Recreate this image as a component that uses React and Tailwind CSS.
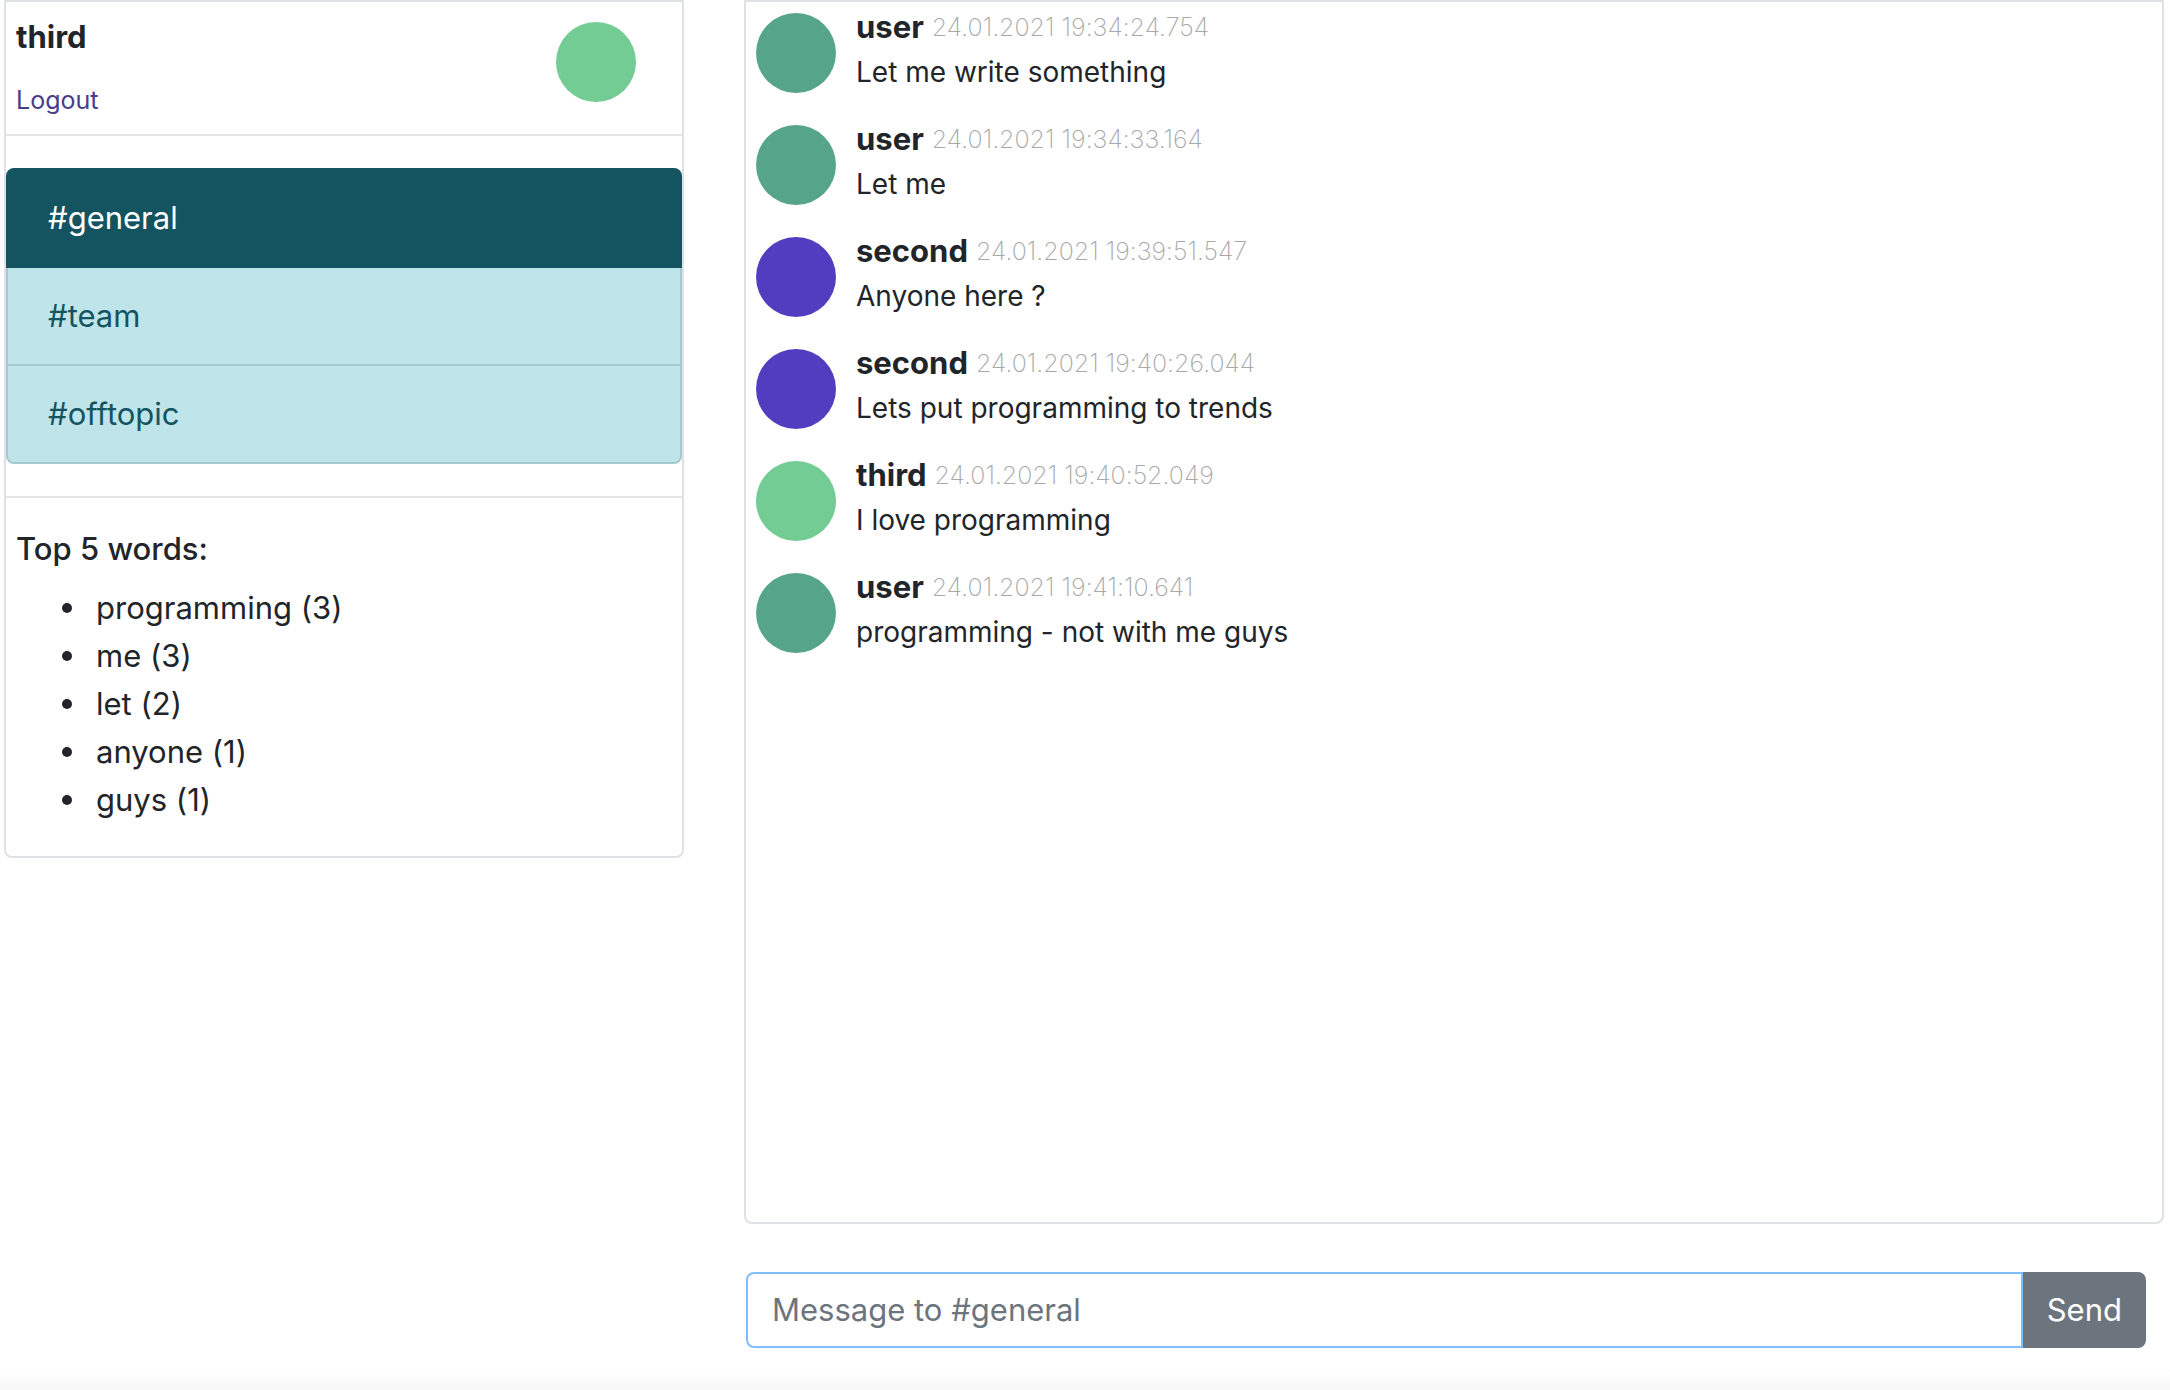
const avatarColors = {
  user: "bg-[#56a58a]",
  second: "bg-[#523cc0]",
  third: "bg-[#72cc93]",
};

const messages = [
  { author: "user", time: "24.01.2021 19:34:24.754", text: "Let me write something" },
  { author: "user", time: "24.01.2021 19:34:33.164", text: "Let me" },
  { author: "second", time: "24.01.2021 19:39:51.547", text: "Anyone here ?" },
  { author: "second", time: "24.01.2021 19:40:26.044", text: "Lets put programming to trends" },
  { author: "third", time: "24.01.2021 19:40:52.049", text: "I love programming" },
  { author: "user", time: "24.01.2021 19:41:10.641", text: "programming - not with me guys" },
];

const words = [
  ["programming", 3],
  ["me", 3],
  ["let", 2],
  ["anyone", 1],
  ["guys", 1],
];

function Avatar({ name }) {
  return <div className={`size-20 shrink-0 rounded-full ${avatarColors[name]}`} />;
}

function Sidebar() {
  return (
    <aside className="self-start rounded-b-lg border-2 border-[#dee2e6]">
      <div className="flex items-start justify-between border-b-2 border-[#e5e5e5] pt-4 pr-[46px] pb-2.5 pl-2.5">
        <div>
          <h1 className="mb-5 leading-[38px] font-bold">third</h1>
          <p className="text-[25px]">
            <a href="#logout" className="text-[#483d8b]">Logout</a>
          </p>
        </div>
        <div className="pt-1">
          <Avatar name="third" />
        </div>
      </div>
      <nav className="flex flex-col py-8">
        <a href="#general" className="rounded-t-lg bg-[#135460] px-[42px] py-[26px] text-white">#general</a>
        <a href="#team" className="border-x-2 border-b-2 border-[#a6c8ce] bg-[#bfe5ea] px-10 py-6 text-[#135460]">#team</a>
        <a href="#offtopic" className="rounded-b-lg border-x-2 border-b-2 border-[#a6c8ce] bg-[#bfe5ea] px-10 py-6 text-[#135460]">#offtopic</a>
      </nav>
      <section className="border-t-2 border-[#e5e5e5] py-8 pl-2.5">
        <h2 className="mb-4 leading-[38px] font-medium">Top 5 words:</h2>
        <ul className="pl-[46px]">
          {words.map(([word, count]) => (
            <li key={word} className="flex items-center gap-6 before:size-2.5 before:rounded-full before:bg-[#212529]">
              {word} ({count})
            </li>
          ))}
        </ul>
      </section>
    </aside>
  );
}

function Message({ author, time, text }) {
  return (
    <li className="flex gap-5 pb-[22px] pl-2.5">
      <div className="pt-2.5">
        <Avatar name={author} />
      </div>
      <div>
        <div className="flex items-start gap-2">
          <span className="font-bold">{author}</span>
          <time className="text-[25px] font-extralight text-[#a8a8a8]">{time}</time>
        </div>
        <p className="text-[28px] leading-[42px]">{text}</p>
      </div>
    </li>
  );
}

export default function App() {
  return (
    <div className="flex min-h-screen flex-col bg-white font-[Inter,sans-serif] text-[31px] leading-[48px] text-[#212529] [font-variant-ligatures:none]">
      <main className="grid flex-1 grid-cols-[680fr_1420fr] gap-[60px] pr-1.5 pl-1">
        <Sidebar />
        <div className="flex min-w-0 flex-col">
          <ul className="flex-1 rounded-b-lg border-2 border-[#dee2e6] pt-px">
            {messages.map((m) => (
              <Message key={m.time} {...m} />
            ))}
          </ul>
          <form className="mt-12 mr-[18px] mb-[18px] ml-0.5 flex" onSubmit={(e) => e.preventDefault()}>
            <input
              type="text"
              aria-label="Message"
              placeholder="Message to #general"
              className="min-w-0 flex-1 rounded-l-lg border-2 border-[#80bdff] px-6 py-3 outline-none placeholder:text-[#6c757d]"
            />
            <button type="submit" className="rounded-r-lg bg-[#6c757d] px-6 py-3.5 text-white">Send</button>
          </form>
        </div>
      </main>
      <div className="h-6 bg-gradient-to-b from-white to-[#f8f8f8]" />
    </div>
  );
}
